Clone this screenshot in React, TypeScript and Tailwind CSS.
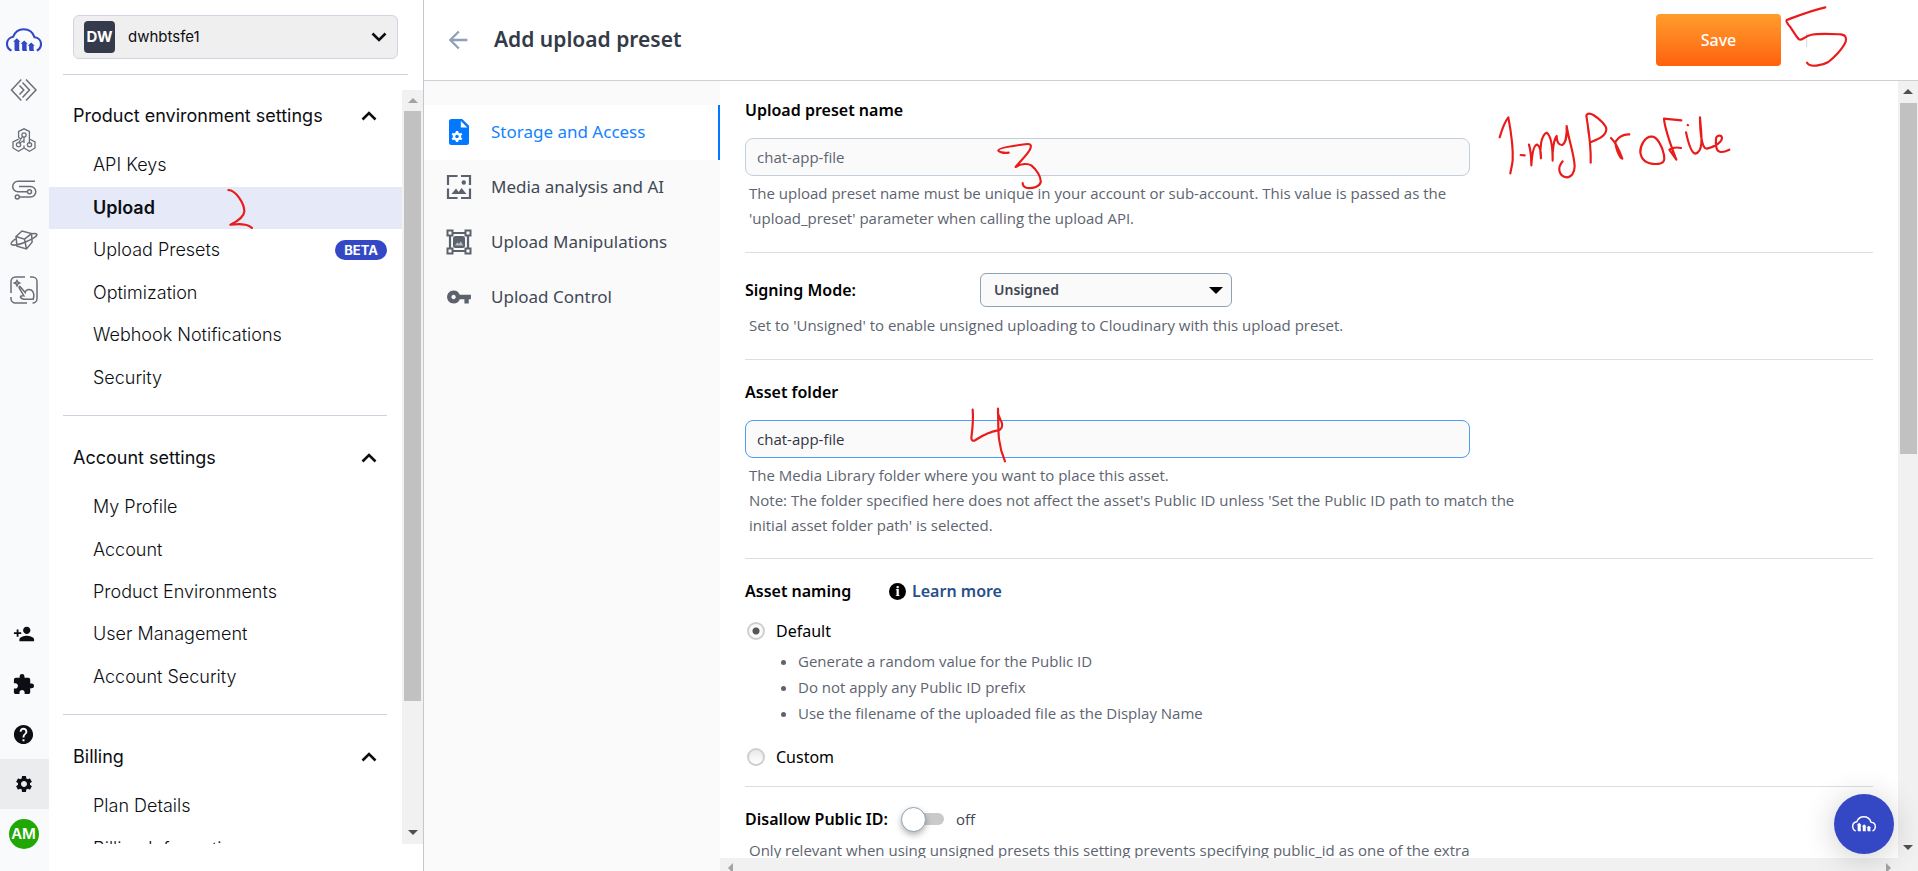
import type { ReactNode } from "react";
import { MdArrowBack, MdExtension, MdHelp, MdPersonAdd, MdSettings, MdVpnKey } from "react-icons/md";

const RAIL_ICON = "fill-none stroke-[#6b6e76]";

function CloudLogo({ className }: { className: string }) {
  return (
    <svg viewBox="0 0 36 24" className={className} aria-hidden="true">
      <path
        d="M5.500 22.600C2.600 21.400 1 18.800 1 15.800c0-3.600 2.600-6.600 6.200-7.100C9 4 13 1.200 17.600 1.200c5.200 0 9.400 3.300 11 8.100 3.700.3 6.400 3.100 6.400 6.800 0 2.900-1.600 5.300-4.200 6.500"
        fill="none"
        stroke="currentColor"
        strokeWidth="2.100"
      />
      <path
        d="M7 13.700 10.800 10.200 14.400 13.700H13.200v7.500c0 .8.300 1.300.8 1.800H10c-.9 0-1.500-.7-1.500-1.500v-7.800zM14.600 15.700l3.600-3.300 3.600 3.300h-1.200v5.500c0 .8.3 1.300.8 1.800h-4c-.9 0-1.300-.7-1.300-1.500v-5.800zM21.700 17.700l3.500-3.200 3.600 3.200h-1.200v3.500c0 .8.3 1.300.8 1.800h-4c-.9 0-1.300-.7-1.300-1.500v-3.800z"
        fill="currentColor"
      />
    </svg>
  );
}

function CodeDiamond() {
  return (
    <svg viewBox="0 0 28 24" width="28" height="24" className={RAIL_ICON} strokeWidth="1.500">
      <path d="M11.300 1.500 1.500 12l9.800 10.500M9.500 7.500 13.800 12l-4.300 4.500M12.500 4.500 19.500 12l-7 7.500M16 1.500 26 12 16 22.500" />
    </svg>
  );
}

function Hexagons() {
  return (
    <svg viewBox="0 0 24 24" width="24" height="24" className={RAIL_ICON} strokeWidth="1.300">
      <path d="M9 11 6.600 9.500v-6L12 .8l5.400 2.700v12.300M12 9v3.500l-4.600 2.700M10.500 8.500 7 14M6.600 11.200 1 14v6l5.500 3.200L12 20l5.500 3.200L23 20v-6l-5-2.800M12 12.500V15M12 20v-2.500" />
      <circle cx="12" cy="7" r="2.100" />
      <circle cx="6.500" cy="16.800" r="2.100" />
      <circle cx="17.500" cy="16.800" r="2.100" />
    </svg>
  );
}

function FlowPath() {
  return (
    <svg viewBox="0 0 26 20" width="26" height="20" className={RAIL_ICON} strokeWidth="1.500">
      <path d="M24 1.200H7a5.300 5.300 0 0 0 0 10.600h9.500M8 6.500h11.500a5.200 5.200 0 0 1 0 10.500H8.500" />
      <circle cx="18.500" cy="11.800" r="2" />
      <circle cx="6.300" cy="17" r="2" />
    </svg>
  );
}

function CubeOrbit() {
  return (
    <svg viewBox="0 0 28 20" width="28" height="20" className={RAIL_ICON} strokeWidth="1.500">
      <path d="M6 6.500 12 1l9.500 2.600.6 8.500L16.500 19 7 16.200zM6 6.500l8.500 2.700 7-5.600M14.500 9.200 16.500 19" />
      <path d="M5.800 8.800C2.500 11 .600 13 1.200 14.200c.9 1.700 7.600.5 14.400-2.200 6.800-2.700 12.200-6.200 11.300-7.700-.5-1-2.700-1-5.200-.5" />
    </svg>
  );
}

function MagicHand() {
  return (
    <svg viewBox="0 0 28 28" width="28" height="28" className={RAIL_ICON} strokeWidth="1.500">
      <path d="M1 17V5.500A4.500 4.500 0 0 1 5.500 1H15M20 1h2.500A4.500 4.500 0 0 1 27 5.500V22.500A4.500 4.500 0 0 1 22.500 27M17 27H5.500A4.500 4.500 0 0 1 1 22.500V21" />
      <path d="M7 4.500 7.900 6.200 9.700 7 7.900 7.900 7 9.700 6.100 7.900 4.300 7l1.800-.8z" />
      <path d="m10 10.500 5.200 6c.500-3 3.500-3.700 6-2.500 2.800 1.500 3.200 6 2 9.200h-9.500c-2.500-.700-3.500-2-3.200-2.700.6-1 2.200-.8 3.400-.7L9.200 11.800c-.4-1 .2-1.700.8-1.300z" />
    </svg>
  );
}

function FileGear() {
  return (
    <svg viewBox="0 0 20 26" width="20" height="26" aria-hidden="true">
      <path d="M2.500 0h10.700L20 6.800v16.700a2.500 2.500 0 0 1-2.500 2.500h-15A2.500 2.500 0 0 1 0 23.500v-21A2.500 2.500 0 0 1 2.500 0z" fill="#0078ff" />
      <path d="M11.800 2v6.500h6.500z" fill="#fff" />
      <circle cx="8" cy="17.500" r="3" fill="none" stroke="#fff" strokeWidth="2.400" />
      <path d="M8 12v2M8 21v2M3.200 14.700l1.800 1M11 19.300l1.800 1M3.200 20.300l1.800-1M11 15.700l1.800-1" stroke="#fff" strokeWidth="2.400" />
    </svg>
  );
}

function Wallpaper() {
  return (
    <svg viewBox="0 0 26 26" width="26" height="26" aria-hidden="true">
      <path d="M11.500 2H2v9M15 2h9v9M2 14.500V24h9.500M15 24h9v-9.500" fill="none" stroke="#5b626d" strokeWidth="2.200" />
      <path d="m5.500 20 4.500-5.500 2.700 3.400 2.800-3.900 5 6z" fill="#5b626d" />
      <circle cx="17.800" cy="8.500" r="2.200" fill="#5b626d" />
    </svg>
  );
}

function TransformFrame() {
  return (
    <svg viewBox="0 0 26 26" width="26" height="26" aria-hidden="true">
      <path d="M6 4h14M6 22h14M4 6v14M22 6v14" stroke="#5b626d" strokeWidth="2.200" />
      <g fill="#fafafa" stroke="#5b626d" strokeWidth="2">
        <path d="M1.500 1.500h5v5h-5zM19.500 1.500h5v5h-5zM1.500 19.500h5v5h-5zM19.500 19.500h5v5h-5z" />
      </g>
      <rect x="7" y="7" width="12" height="12" rx="2.500" fill="#5b626d" />
      <path d="m9 16.500 2.300-3.200 1.500 1.700 2-2.500 2.500 4z" fill="#b9bcc1" />
    </svg>
  );
}

function Chevron({ down = false }: { down?: boolean }) {
  return (
    <svg viewBox="0 0 16 10" width="16" height="10" className={down ? "rotate-180" : ""} aria-hidden="true">
      <path d="M1.500 8.500 8 2l6.500 6.500" fill="none" stroke="#0c0e13" strokeWidth="2.600" />
    </svg>
  );
}

function Arrow({ dir, color }: { dir: "up" | "down" | "left" | "right"; color: string }) {
  const points = { up: "0,7 5,2 10,7", down: "0,3 5,8 10,3", left: "7,0 2,5 7,10", right: "3,0 8,5 3,10" }[dir];
  return (
    <svg viewBox="0 0 10 10" width="10" height="10" aria-hidden="true">
      <polygon points={points} fill={color} />
    </svg>
  );
}

const topTools: { name: string; icon: ReactNode }[] = [
  { name: "Cloudinary home", icon: <CloudLogo className="h-6 w-9 text-[#3448c5]" /> },
  { name: "Developer", icon: <CodeDiamond /> },
  { name: "Assets", icon: <Hexagons /> },
  { name: "Flows", icon: <FlowPath /> },
  { name: "3D", icon: <CubeOrbit /> },
  { name: "Studio", icon: <MagicHand /> },
];

const bottomTools: { name: string; icon: ReactNode; active?: boolean }[] = [
  { name: "Invite", icon: <MdPersonAdd size={22} /> },
  { name: "Add-ons", icon: <MdExtension size={23} /> },
  { name: "Help", icon: <MdHelp size={23} /> },
  { name: "Settings", icon: <MdSettings size={20} />, active: true },
];

const LIST_HEIGHT: Record<number, string> = { 2: "h-[85px]", 5: "h-[212px]", 6: "h-[255px]" };

function MenuGroup({ title, items, first = false }: { title: string; items: string[]; first?: boolean }) {
  return (
    <section>
      <button type="button" className={`flex w-full items-center justify-between pr-[25px] pb-1.5 pl-6 text-left ${first ? "h-[54px] pt-1" : "h-[70px] pt-5"}`}>
        {title}
        <Chevron />
      </button>
      <ul className={`grid auto-rows-fr ${LIST_HEIGHT[items.length]}`}>
        {items.map((item) => (
          <li key={item} className={item === "Upload" ? "bg-[#e5e9f8] font-semibold" : "font-light"}>
            <a href="#" className="flex h-full items-center justify-between pr-[15px] pl-11">
              {item}
              {item === "Upload Presets" && (
                <span className="rounded-full bg-[#3448c5] px-[9px] text-[13px] leading-5 font-bold text-white">BETA</span>
              )}
            </a>
          </li>
        ))}
      </ul>
      <hr className="mt-4 mr-[15px] ml-3.5 border-[#cfd2de]" />
    </section>
  );
}

function Sidebar() {
  return (
    <aside className="flex w-[375px] shrink-0 flex-col border-r border-[#c3c8d0] bg-white font-['Inter',sans-serif] text-lg text-[#0c0e13]">
      <div className="py-[15px] pr-[15px] pl-3.5">
        <button type="button" className="mx-2.5 flex h-11 w-[325px] items-center rounded-md border border-[#d0d3e2] bg-[#efefef] px-2.5 text-[15px]">
          <span className="flex h-8 w-[31px] items-center justify-center rounded bg-[#353b4d] font-bold text-white">DW</span>
          <span className="ml-[13px] flex-1 text-left">dwhbtsfe1</span>
          <Chevron down />
        </button>
        <hr className="mt-[15px] border-[#cfd2e0]" />
      </div>
      <div className="mb-[27px] flex min-h-0 flex-1">
        <nav className="min-w-0 flex-1 overflow-hidden" aria-label="Settings">
          <MenuGroup first title="Product environment settings" items={["API Keys", "Upload", "Upload Presets", "Optimization", "Webhook Notifications", "Security"]} />
          <MenuGroup title="Account settings" items={["My Profile", "Account", "Product Environments", "User Management", "Account Security"]} />
          <MenuGroup title="Billing" items={["Plan Details", "Billing Information"]} />
        </nav>
        <div className="flex w-[21px] flex-col items-center bg-[#f1f1f1]">
          <div className="flex h-[21px] items-center"><Arrow dir="up" color="#a3a3a3" /></div>
          <div className="w-[17px] flex-[591] bg-[#c1c1c1]" />
          <div className="flex-[119]" />
          <div className="flex h-6 items-center"><Arrow dir="down" color="#505050" /></div>
        </div>
      </div>
    </aside>
  );
}

function SectionTabs() {
  const tabs = [
    { name: "Storage and Access", icon: <FileGear />, active: true },
    { name: "Media analysis and AI", icon: <Wallpaper /> },
    { name: "Upload Manipulations", icon: <TransformFrame /> },
    { name: "Upload Control", icon: <MdVpnKey size={26} color="#5b626d" /> },
  ];
  return (
    <nav className="w-[296px] shrink-0 bg-[#fafafa] pt-6" aria-label="Preset sections">
      {tabs.map((tab) => (
        <a
          key={tab.name}
          href="#"
          className={`flex h-[55px] items-center gap-[19px] pb-0.5 pl-[22px] text-[17px] ${tab.active ? "border-r-2 border-[#0078ff] bg-white text-[#1383ff]" : "text-[#414855]"}`}
        >
          <span className="flex w-[26px] justify-center">{tab.icon}</span>
          {tab.name}
        </a>
      ))}
    </nav>
  );
}

const TITLE = "block text-base leading-[22px] font-semibold text-black";
const SMALL = "font-['Open_Sans',sans-serif] text-[15px]";
const HELP = `max-w-[780px] pl-1 leading-[25px] text-[#5d6470] ${SMALL}`;
const FIELD = `mt-[17px] block h-[38px] w-[725px] max-w-full rounded-lg border bg-[#fafafa] px-[11px] outline-none ${SMALL}`;
const RADIO =
  "size-[18px] appearance-none rounded-full border-2 border-[#cfcfcf] bg-linear-to-b from-[#e9e9e9] to-white checked:bg-[radial-gradient(circle,#555_0_3px,#fafafa_4px)]";

function PresetForm() {
  return (
    <form className="min-w-0 flex-1 overflow-hidden px-[25px]">
      <section className="border-b border-[#dcdee0] pt-[18px] pb-[21px]">
        <label htmlFor="preset-name" className={TITLE}>Upload preset name</label>
        <input id="preset-name" defaultValue="chat-app-file" className={`${FIELD} border-[#c3cfdb] text-[#5d6470]`} />
        <p className={`mt-[5px] ${HELP}`}>
          The upload preset name must be unique in your account or sub-account. This value is passed as the
          <br />
          'upload_preset' parameter when calling the upload API.
        </p>
      </section>

      <section className="border-b border-[#dcdee0] pt-5 pb-[21px]">
        <div className="flex items-center">
          <label htmlFor="signing" className={`${TITLE} w-[235px]`}>Signing Mode:</label>
          <div className="grid w-[252px] items-center">
            <select id="signing" className="col-start-1 row-start-1 h-[34px] appearance-none rounded-md border border-[#8ea1b3] bg-[#fafafa] px-[13px] text-sm font-semibold text-[#3f4651]">
              <option>Unsigned</option>
              <option>Signed</option>
            </select>
            <svg viewBox="0 0 14 7" className="pointer-events-none col-start-1 row-start-1 mr-[9px] h-[7px] w-3.5 justify-self-end" aria-hidden="true">
              <polygon points="0,0 14,0 7,7" fill="#000" />
            </svg>
          </div>
        </div>
        <p className={`mt-1.5 ${HELP}`}>Set to 'Unsigned' to enable unsigned uploading to Cloudinary with this upload preset.</p>
      </section>

      <section className="border-b border-[#dcdee0] pt-[21px] pb-5">
        <label htmlFor="asset-folder" className={TITLE}>Asset folder</label>
        <input id="asset-folder" defaultValue="chat-app-file" className={`${FIELD} border-[#4d9cf5] text-[#30353e]`} />
        <p className={`mt-[5px] ${HELP}`}>
          The Media Library folder where you want to place this asset.
          <br />
          Note: The folder specified here does not affect the asset's Public ID unless 'Set the Public ID path to match the
          <br />
          initial asset folder path' is selected.
        </p>
      </section>

      <section className="border-b border-[#dcdee0] pt-[21px] pb-[17px]">
        <div className="flex items-center">
          <h2 className={`${TITLE} w-36`}>Asset naming</h2>
          <a href="#" className="flex items-center gap-1.5 text-base leading-[22px] font-semibold text-[#27508a]">
            <span className="flex size-[17px] items-center justify-center rounded-full bg-black font-['Liberation_Serif',serif] text-[15px] leading-none font-bold text-white">i</span>
            Learn more
          </a>
        </div>
        <label className="mt-[17px] flex items-center gap-[11px] pl-0.5 text-base leading-6 text-black">
          <input type="radio" name="naming" defaultChecked className={RADIO} />
          Default
        </label>
        <ul className={`mt-[5px] list-disc pl-[53px] leading-[26px] text-[#5d6470] ${SMALL}`}>
          <li>Generate a random value for the Public ID</li>
          <li>Do not apply any Public ID prefix</li>
          <li>Use the filename of the uploaded file as the Display Name</li>
        </ul>
        <label className="mt-[19px] flex items-center gap-[11px] pl-0.5 text-base leading-6 text-black">
          <input type="radio" name="naming" className={RADIO} />
          Custom
        </label>
      </section>

      <section className="pt-[21px]">
        <div className="flex h-[22px] items-center">
          <label htmlFor="disallow" className={TITLE}>Disallow Public ID:</label>
          <span className="ml-[13px] flex w-[43px] items-center rounded-full">
            <input
              id="disallow"
              type="checkbox"
              role="switch"
              className="z-10 size-[25px] appearance-none rounded-full border border-[#8ea1b3] bg-white shadow-[0_3px_6px_rgba(0,0,0,0.3)]"
            />
            <span className="-ml-2 h-3 flex-1 rounded-r-full bg-[#cacaca]" />
          </span>
          <span className={`ml-3 text-[#414855] ${SMALL}`}>off</span>
        </div>
        <p className={`mt-2 ${HELP}`}>
          Only relevant when using unsigned presets this setting prevents specifying public_id as one of the extra
        </p>
      </section>
    </form>
  );
}

function Notes() {
  return (
    <svg viewBox="0 0 1918 871" className="pointer-events-none absolute top-0 left-0 z-30 h-[871px] w-[1918px] max-w-none" fill="none" stroke="#ea1b1b" strokeWidth="6.500" strokeLinecap="round" strokeLinejoin="round" aria-hidden="true">
      <g transform="scale(.33333)">
        <path d="M685 570C708 571 733 610 733 634C732 650 712 664 691 674C712 672 741 669 756 684" />
      </g>
      <g transform="translate(740 90) scale(.33333)">
        <path d="M806 188C790 190 775 186 775 181C775 173 830 166 862 162C874 161 875 168 869 180C860 196 838 217 827 231C845 220 864 220 874 226C890 239 904 262 902 277C899 290 880 295 862 294C852 292 848 287 848 279" />
      </g>
      <g transform="translate(740 370) scale(.33333)">
        <path d="M698 119C701 154 697 178 694 204C694 213 700 214 707 210C724 199 740 187 773 181C784 180 788 170 786 160C782 148 776 140 774 130V116C775 150 774 180 777 207C780 232 786 253 795 274" />
      </g>
      <g transform="translate(1460 0) scale(.33333)">
        <path d="M1040 100V140" stroke="#d5d7da" strokeWidth="3" />
        <path d="M1096 22C1055 31 1020 45 980 60C977 63 984 73 990 80C1000 94 1010 112 1017 118C1028 124 1034 108 1052 105C1073 99 1120 102 1143 103C1158 105 1160 116 1157 125C1148 148 1118 176 1105 186C1089 196 1048 204 1041 188" />
        <path d="M119 412C126 388 135 364 145 352C154 400 160 440 158 480C157 495 153 508 151 520M182 465L194 466" />
        <path d="M207 434C213 455 214 475 214 496C216 465 220 434 232 434C241 440 243 460 243 475C238 450 243 404 260 398C274 408 278 445 278 482C276 450 283 415 290 408C289 425 297 436 306 435C318 430 321 400 320 378C325 415 342 460 344 498C344 520 333 532 320 532C300 530 288 507 308 484" />
        <path d="M392 488C394 435 386 390 379 347C382 338 392 340 400 345C420 357 439 377 439 388C437 410 412 418 393 426M384 382L386 400" />
        <path d="M453 414C470 430 478 451 487 476C478 475 464 436 467 424C477 409 490 402 508 403" />
        <path d="M578 410C554 406 540 440 541 457C544 480 561 492 588 492C612 492 615 482 612 465C607 438 592 413 578 410Z" />
        <path d="M664 361L612 356C615 392 634 440 649 479L628 449C638 442 650 441 663 444" />
        <path d="M678 397C684 425 693 460 706 461C735 455 722 390 720 352C720 390 724 448 741 446C765 440 787 426 786 412C783 404 768 406 768 417C766 438 769 455 782 456C792 457 800 453 808 449M683 375L684 376" />
      </g>
    </svg>
  );
}

export default function App() {
  return (
    <div className="relative flex h-screen overflow-hidden bg-white font-['Noto_Sans',sans-serif]">
      <nav className="flex w-[49px] shrink-0 flex-col items-center bg-[#f9fafc] pt-[15px] pb-3 text-[#0c0e13]" aria-label="Products">
        {topTools.map((tool) => (
          <a key={tool.name} href="#" aria-label={tool.name} className="flex h-[50px] w-full items-center justify-center pr-0.5">{tool.icon}</a>
        ))}
        <div className="flex-1" />
        {bottomTools.map((tool) => (
          <a key={tool.name} href="#" aria-label={tool.name} className={`flex h-[50px] w-full items-center justify-center pr-0.5 ${tool.active ? "bg-[#ebecee]" : ""}`}>{tool.icon}</a>
        ))}
        <button type="button" className="my-2.5 mr-0.5 size-[30px] rounded-full bg-[#22a806] font-['Inter',sans-serif] text-[15px] font-semibold text-white">AM</button>
      </nav>

      <Sidebar />

      <main className="flex min-w-0 flex-1 flex-col">
        <header className="flex h-[81px] items-center border-b border-[#cdcfd2] pr-[137px] pl-5">
          <a href="#" aria-label="Back"><MdArrowBack size={28} color="#8ea1b8" /></a>
          <h1 className="ml-[22px] flex-1 text-[21px] font-semibold text-[#343b47]">Add upload preset</h1>
          <button type="button" className="h-[52px] w-[125px] rounded bg-linear-to-b from-[#ff9c2c] to-[#ff600c] text-base font-medium text-white">Save</button>
        </header>
        <div className="flex min-h-0 flex-1">
          <SectionTabs />
          <div className="flex min-w-0 flex-1 flex-col">
            <div className="flex min-h-0 flex-1">
              <PresetForm />
              <div className="flex w-5 flex-col items-center bg-[#f1f1f1]">
                <div className="flex h-[22px] items-center"><Arrow dir="up" color="#505050" /></div>
                <div className="w-[17px] flex-[351] bg-[#c1c1c1]" />
                <div className="flex-[382]" />
                <div className="flex h-[22px] items-center"><Arrow dir="down" color="#505050" /></div>
              </div>
            </div>
            <div className="flex h-[13px] items-start justify-between overflow-hidden bg-[#f1f1f1] pt-[5px] pr-[25px] pl-1.5">
              <Arrow dir="left" color="#a3a3a3" />
              <Arrow dir="right" color="#a3a3a3" />
            </div>
          </div>
        </div>
      </main>

      <button type="button" aria-label="Open Cloudinary assistant" className="absolute right-6 bottom-[17px] z-20 flex size-[60px] items-center justify-center rounded-full bg-[#3448c5] text-white shadow-[0_4px_32px_rgba(0,0,0,0.2)]">
        <CloudLogo className="h-4 w-6" />
      </button>
      <Notes />
    </div>
  );
}
